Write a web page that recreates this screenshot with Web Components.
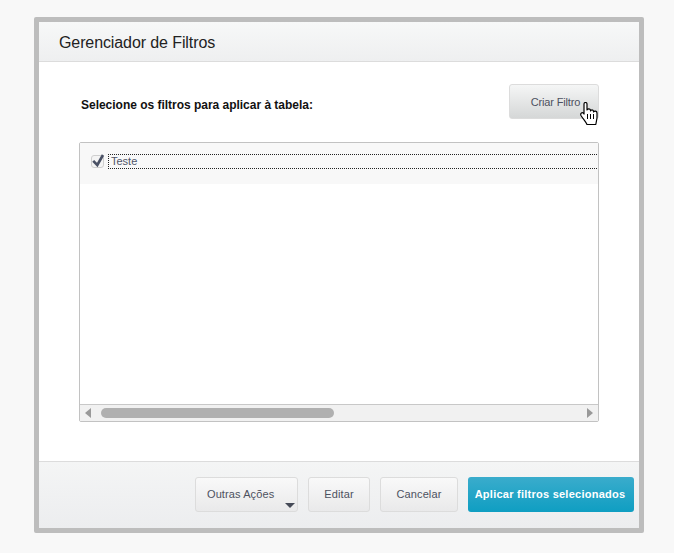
<!DOCTYPE html>
<html>
<head>
<meta charset="utf-8">
<title>Gerenciador de Filtros</title>
<style>
    html, body { margin: 0; height: 553px; overflow: hidden; background: #f8f8f8; }
    body { font-family: "Liberation Sans", Arial, sans-serif; padding: 17px 0 0 34px; box-sizing: border-box; }
</style>
</head>
<body>
<filter-dialog heading="Gerenciador de Filtros">
    <filter-toolbar label="Selecione os filtros para aplicar à tabela:">
        <ui-button style="width:90px" variant="strong">Criar Filtro</ui-button>
    </filter-toolbar>
    <filter-list>
        <filter-row>Teste</filter-row>
    </filter-list>
    <ui-button slot="footer" style="width:103px" menu>Outras Ações</ui-button>
    <ui-button slot="footer" style="width:62px">Editar</ui-button>
    <ui-button slot="footer" style="width:78px">Cancelar</ui-button>
    <ui-button slot="footer" style="width:166px" variant="primary">Aplicar filtros selecionados</ui-button>
</filter-dialog>
<hand-cursor></hand-cursor>

<script>
class FilterDialog extends HTMLElement {
    constructor() {
        super();
        const shadow = this.attachShadow({mode: "open"});
        shadow.innerHTML = `
            <style>
                :host {
                    display: flex;
                    flex-direction: column;
                    box-sizing: border-box;
                    width: 610px;
                    height: 516px;
                    border: 5px solid #bdbdbd;
                    border-radius: 2px;
                    background: #fff;
                }
                header {
                    box-sizing: border-box;
                    height: 40px;
                    padding: 2px 20px 0;
                    display: flex;
                    align-items: center;
                    font-size: 16px;
                    letter-spacing: -0.1px;
                    color: #222;
                    background: linear-gradient(#f7f8f8, #eeeff0);
                    border-bottom: 1px solid #dcdcdc;
                }
                main { flex: 1; padding: 22px 40px 0 40px; }
                footer {
                    box-sizing: border-box;
                    height: 67px;
                    padding: 15px 5px 0 0;
                    display: flex;
                    justify-content: flex-end;
                    gap: 10px;
                    background: linear-gradient(#f4f5f5, #ecedef);
                    border-top: 1px solid #dcdcdc;
                }
            </style>
            <header></header>
            <main><slot></slot></main>
            <footer><slot name="footer"></slot></footer>
        `;
        shadow.querySelector("header").textContent = this.getAttribute("heading");
    }
}

class FilterToolbar extends HTMLElement {
    constructor() {
        super();
        const shadow = this.attachShadow({mode: "open"});
        shadow.innerHTML = `
            <style>
                :host {
                    display: flex;
                    justify-content: space-between;
                    align-items: center;
                    height: 35px;
                    margin-bottom: 23px;
                }
                span { font-size: 12px; font-weight: bold; letter-spacing: -0.02px; color: #111; margin: 6px 0 0 2px; }
            </style>
            <span></span>
            <slot></slot>
        `;
        shadow.querySelector("span").textContent = this.getAttribute("label");
    }
}

class UiButton extends HTMLElement {
    constructor() {
        super();
        const shadow = this.attachShadow({mode: "open"});
        shadow.innerHTML = `
            <style>
                :host {
                    display: flex;
                    align-items: center;
                    justify-content: center;
                    position: relative;
                    box-sizing: border-box;
                    height: 35px;
                    padding-bottom: 2px;
                    border: 1px solid #dcdcdc;
                    border-radius: 3px;
                    font-size: 11px;
                    letter-spacing: 0.1px;
                    color: #4d5160;
                    background: linear-gradient(#f9f9f9, #e9e9ea);
                }
                :host([variant="strong"]) {
                    padding: 0 0 0 3px;
                    letter-spacing: -0.15px;
                    background: linear-gradient(#f5f6f6, #d5d7d7);
                }
                :host([variant="primary"]) {
                    border: 0;
                    padding-right: 2px;
                    letter-spacing: 0.25px;
                    color: #fff;
                    font-weight: bold;
                    background: linear-gradient(#3aaccc, #0f9ec2);
                }
                :host([menu]) { justify-content: flex-start; padding-left: 11px; }
                i {
                    display: none;
                    position: absolute;
                    right: 2px;
                    bottom: 3px;
                    border: 5px solid transparent;
                    border-top: 5px solid #454a57;
                    border-bottom: 0;
                }
                :host([menu]) i { display: block; }
            </style>
            <slot></slot><i></i>
        `;
    }
}

class FilterList extends HTMLElement {
    constructor() {
        super();
        const shadow = this.attachShadow({mode: "open"});
        shadow.innerHTML = `
            <style>
                :host {
                    display: flex;
                    flex-direction: column;
                    box-sizing: border-box;
                    width: 520px;
                    height: 280px;
                    border: 1px solid #c2c2c2;
                    border-radius: 2px;
                    background: #fff;
                }
                .rows { flex: 1; }
                .bar {
                    box-sizing: border-box;
                    height: 17px;
                    display: flex;
                    align-items: center;
                    gap: 10px;
                    padding: 0 5px;
                    background: #f1f1f1;
                    border-top: 1px solid #c8c8c8;
                }
                .left, .right { border: 5px solid transparent; width: 0; height: 0; }
                .left { border-left: 0; border-right: 6px solid #999; }
                .right { border-right: 0; border-left: 6px solid #999; margin-left: auto; }
                .thumb { width: 233px; height: 10px; border-radius: 5px; background: #b0b0b0; }
            </style>
            <div class="rows"><slot></slot></div>
            <div class="bar">
                <span class="left"></span><span class="thumb"></span><span class="right"></span>
            </div>
        `;
    }
}

class FilterRow extends HTMLElement {
    constructor() {
        super();
        const shadow = this.attachShadow({mode: "open"});
        shadow.innerHTML = `
            <style>
                :host {
                    display: flex;
                    align-items: flex-start;
                    box-sizing: border-box;
                    height: 41px;
                    padding: 10px 0 0 11px;
                    background: #f8f8f8;
                }
                .box {
                    flex: none;
                    box-sizing: border-box;
                    width: 13px;
                    height: 13px;
                    margin: 2px 4px 0 0;
                    border: 1px solid #cfcfcf;
                    border-radius: 3px;
                    background: #f4f4f4;
                    display: flex;
                }
                svg { margin: -3px 0 0 -1px; overflow: visible; flex: none; }
                .label {
                    flex: 1;
                    box-sizing: border-box;
                    height: 15px;
                    margin: 1px 1px 0 0;
                    padding-left: 2px;
                    line-height: 12px;
                    font-size: 11px;
                    color: #4f5568;
                    border-top: 1px dotted #222;
                    border-bottom: 1px dotted #222;
                    border-left: 1px dotted #222;
                }
            </style>
            <span class="box">
                <svg width="14" height="14" viewBox="0 0 14 14"><path d="M2.2 7.8 L6.3 12 L12 2" fill="none" stroke="#4a5165" stroke-width="2.6"/></svg>
            </span>
            <span class="label"><slot></slot></span>
        `;
    }
}

class HandCursor extends HTMLElement {
    constructor() {
        super();
        const shadow = this.attachShadow({mode: "open"});
        shadow.innerHTML = `
            <style>
                :host { position: absolute; left: 580px; top: 102px; width: 19px; height: 24px; }
                svg { display: block; }
            </style>
            <svg width="19" height="24" viewBox="0 0 19 24">
                <path d="M4 2 C4 0 7 0 7 2 V8 C8 6.5 10 6.5 10.5 8 V9 C11 7.5 13 7.5 13.5 9 V10 C14.5 8.5 17 9 17 11 V16 L15.8 22.5 H7 C6 20 3.5 17.5 1 13.5 C0 11.5 2 10 3.2 11 L4 12 Z" fill="#fff" stroke="#000" stroke-width="1.2" stroke-linejoin="round"/>
                <path d="M7.5 12 V17 M10.5 12 V17 M13.5 12 V17" stroke="#000" stroke-width="1" fill="none"/>
            </svg>
        `;
    }
}

window.customElements.define("filter-dialog", FilterDialog);
window.customElements.define("filter-toolbar", FilterToolbar);
window.customElements.define("ui-button", UiButton);
window.customElements.define("filter-list", FilterList);
window.customElements.define("filter-row", FilterRow);
window.customElements.define("hand-cursor", HandCursor);
</script>
</body>
</html>
